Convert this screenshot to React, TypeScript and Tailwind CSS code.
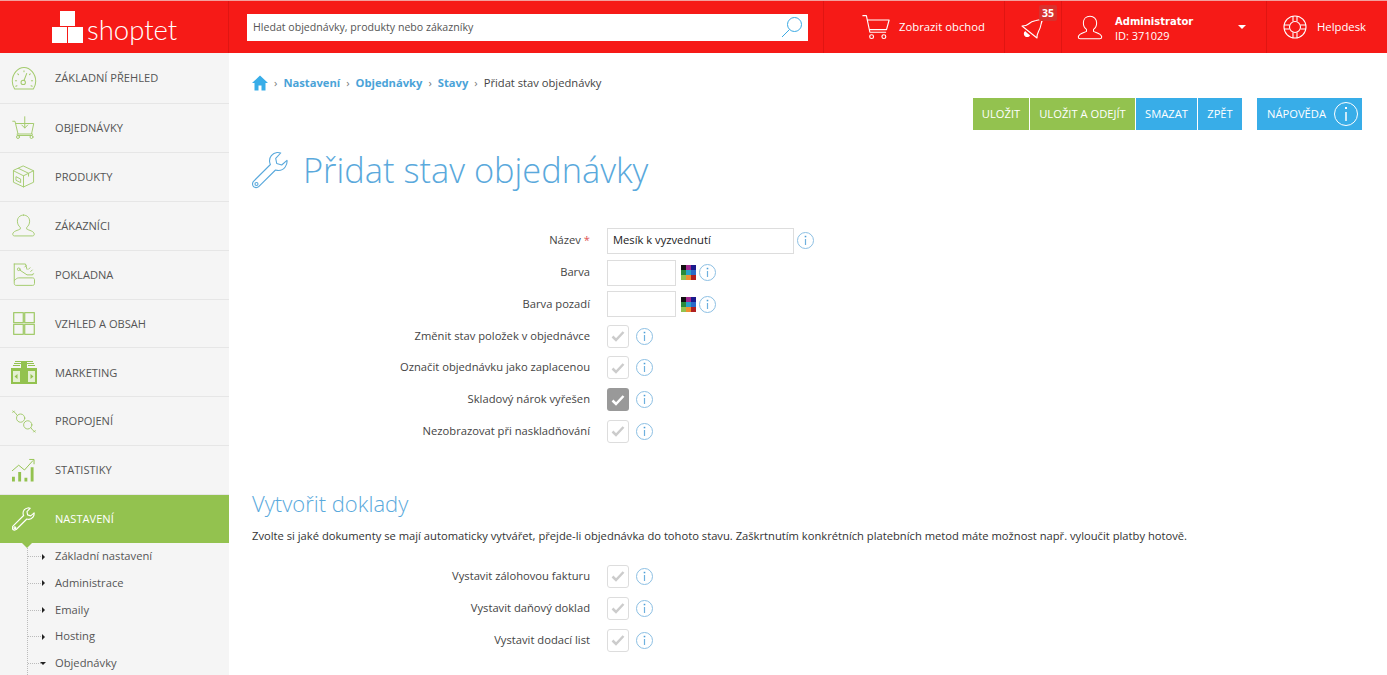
import type { ReactNode } from "react";

const font = "font-['Open_Sans',sans-serif]";

function Svg({ className, children, box = "0 0 32 32" }: { className?: string; children: ReactNode; box?: string }) {
  return (
    <svg viewBox={box} fill="none" stroke="currentColor" strokeWidth={1.3} strokeLinecap="round" strokeLinejoin="round" className={className}>
      {children}
    </svg>
  );
}

function Wrench({ className, width = 1.2 }: { className?: string; width?: number }) {
  return (
    <svg viewBox="0 0 38 38" fill="none" stroke="currentColor" strokeWidth={width} strokeLinejoin="round" className={className}>
      <path d="M25 1.500c-4.600.6-8 4.700-7.400 9.300.1 1 .4 1.900.8 2.700L1.500 30.400c-1.300 1.300-1.300 4 0 5.200 1.300 1.300 4 1.300 5.200 0L23.500 19c3.500 1.100 7.400 0 9.700-3 1.500-2 2.100-4.300 1.800-6.600l-5.300 4.600-5-1.500-1-5.100L28.700 2c-1-.4-2.600-.6-3.700-.5Z" />
      <circle cx="4.500" cy="33" r="1.500" />
    </svg>
  );
}

function Gauge() {
  return (
    <Svg className="w-[28px] h-[25px]">
      <path d="M4 29.500C2 26.500 1 23 1 19.500 1 10 8 2 16 2s15 8 15 17.500c0 3.500-1 7-3 10Z" />
      <path d="M5 19h1.500M25.500 19H27M16 6v1.500M8 10l1 1M24 10l-1 1M5.500 26l1.500-.7M26.500 26l-1.500-.7" />
      <circle cx="15" cy="21" r="2.800" />
      <path d="m16 18.500 3.500-9" />
    </Svg>
  );
}

function OrdersIcon() {
  return (
    <Svg className="w-[24px] h-[26px]">
      <path d="M1 7h3l4 17h18l3-14H5" />
      <path d="M7 24v1.500M27 24v1.500M8 26h18" />
      <circle cx="8" cy="28" r="2" />
      <circle cx="26" cy="28" r="2" />
      <path d="M17 1v15M13 12l4 4 4-4M10 10h14" />
    </Svg>
  );
}

function Box() {
  return (
    <Svg className="w-[23px] h-[25px]">
      <path d="M16 1.500 30 8v16l-14 6.500L2 24V8ZM2 8l14 7 14-7M16 15v15.500M9 4.700 23 11.500v4" />
      <path d="M6 16.500l6 3v5l-6-3Z" />
    </Svg>
  );
}

function Person({ className }: { className?: string }) {
  return (
    <Svg className={className}>
      <path d="M16 1.500c-5 0-8.500 3.500-8.500 8.500 0 3.800 1.800 7 4 8.500V21c-3 1.800-10 2.500-10.500 7 0 1.500 1 2.500 2.500 2.500h25c1.500 0 2.500-1 2.500-2.500-.5-4.500-7.500-5.200-10.500-7v-2.500c2.200-1.500 4-4.700 4-8.500 0-5-3.500-8.500-8.500-8.500Z" />
    </Svg>
  );
}

function Till() {
  return (
    <Svg className="w-[24px] h-[25px]">
      <path d="M3 2h15l2 7M3 2v26c0 1.500 1 2.500 2.500 2.500h22c1.500 0 2.500-1 2.500-2.500v-5c0-1.500-1-2.500-2.500-2.500H9c-2.500 0-4 2-6 3.500" />
      <circle cx="9" cy="9" r="1.800" />
      <path d="m11 10.500 9 6h7M17 6l2-2M22 9l2-2M25 12l2-2M27 16l2-1" />
    </Svg>
  );
}

function Grid4() {
  return (
    <Svg className="w-[22px] h-[23px]" box="0 0 22 23">
      <rect x="0.700" y="0.700" width="9.600" height="10" />
      <rect x="11.700" y="0.700" width="9.600" height="10" />
      <rect x="0.700" y="12.300" width="9.600" height="10" />
      <rect x="11.700" y="12.300" width="9.600" height="10" />
    </Svg>
  );
}

function Money() {
  return (
    <svg viewBox="0 0 26 23" className="w-[26px] h-[23px] text-[#93c24f]">
      <path fill="currentColor" d="M4 0h18v1H4zM3 2h20v1H3zM2 4h22v1H2z" />
      <rect x="0" y="7" width="26" height="16" fill="currentColor" />
      <rect x="2" y="10" width="7" height="11" fill="#e4f0d2" />
      <rect x="17" y="10" width="7" height="11" fill="#e4f0d2" />
      <path fill="currentColor" d="m3.500 15.500 3-2.500v5zM22.500 15.500l-3-2.500v5z" />
      <path fill="currentColor" d="M10 0h6v23h-6z" />
      <path fill="#f5f5f5" d="M9 4h1v3H9zM16 4h1v3h-1z" />
    </svg>
  );
}

function Plug() {
  return (
    <Svg className="w-[24px] h-[25px]" box="0 0 32 32">
      <path d="m1 2 3 2 3 4M31 30l-3-2-3-4" />
      <circle cx="11.500" cy="11.500" r="5.500" />
      <circle cx="21" cy="20.500" r="5.500" />
      <path d="m3 2-2 2M29 30l2-2" />
    </Svg>
  );
}

function Stats() {
  return (
    <svg viewBox="0 0 24 24" className="w-[23px] h-[24px] text-[#93c24f]">
      <path fill="currentColor" d="M0 19h3v5H0zM6.500 14h3v10h-3zM13 20h3v4h-3zM19.500 9h3v15h-3z" />
      <path fill="none" stroke="currentColor" d="m0 13 7-6 6 5 9-10M18 1h5v5" />
    </svg>
  );
}

const menu: { label: string; icon: ReactNode }[] = [
  { label: "ZÁKLADNÍ PŘEHLED", icon: <Gauge /> },
  { label: "OBJEDNÁVKY", icon: <OrdersIcon /> },
  { label: "PRODUKTY", icon: <Box /> },
  { label: "ZÁKAZNÍCI", icon: <Person className="w-[23px] h-[25px]" /> },
  { label: "POKLADNA", icon: <Till /> },
  { label: "VZHLED A OBSAH", icon: <Grid4 /> },
  { label: "MARKETING", icon: <Money /> },
  { label: "PROPOJENÍ", icon: <Plug /> },
  { label: "STATISTIKY", icon: <Stats /> },
];

const subMenu = ["Základní nastavení", "Administrace", "Emaily", "Hosting", "Objednávky"];

function Sidebar() {
  return (
    <aside className="w-[229px] shrink-0 bg-[#f5f5f5] text-[#555] overflow-hidden">
      {menu.map((item) => (
        <div key={item.label} className="h-[48.9px] first:h-[51px] flex items-center border-b border-[#e6e6e6]">
          <div className="w-[47px] mr-[8px] shrink-0 flex justify-center text-[#a3cb6d]">{item.icon}</div>
          <span className="text-[11.1px] pt-[1px]">{item.label}</span>
        </div>
      ))}
      <div className="relative h-[48px] flex items-center bg-[#93c24f] text-white">
        <div className="w-[47px] mr-[8px] shrink-0 flex justify-center">
          <Wrench className="w-[24px] h-[24px]" width={1.800} />
        </div>
        <span className="text-[11.1px] pt-[1px]">NASTAVENÍ</span>
        <div className="absolute left-[22px] -bottom-[5px] border-x-[5px] border-t-[5px] border-x-transparent border-t-[#93c24f]" />
      </div>
      <ul className="ml-[27px] border-l border-dotted border-[#bbb]">
        {subMenu.map((name, i) => (
          <li key={name} className="h-[26.75px] flex items-center">
            <span className="w-[13px] border-t border-dotted border-[#bbb]" />
            {i === 4 ? (
              <span className="mr-[9px] ml-[-1px] border-x-[3px] border-t-[3px] border-x-transparent border-t-[#222]" />
            ) : (
              <span className="ml-[1px] mr-[10px] border-y-[3px] border-l-[3px] border-y-transparent border-l-[#222]" />
            )}
            <span className="text-[11.2px] text-[#555]">{name}</span>
          </li>
        ))}
      </ul>
    </aside>
  );
}

function Cart({ className }: { className?: string }) {
  return (
    <Svg className={className}>
      <path d="M1 3h4l4 19h18M6.500 8H31l-3 11H9" />
      <circle cx="11" cy="27" r="2.200" />
      <circle cx="25" cy="27" r="2.200" />
    </Svg>
  );
}

function Header() {
  return (
    <header className="h-[53px] shrink-0 bg-[#f61a17] border-t border-[#f2a09e] flex text-white">
      <div className="w-[229px] shrink-0 flex items-center border-r border-[#e01512] pl-[52px]">
        <div className="flex items-end mt-[2px]">
          <div className="flex flex-col items-center w-[31px] mr-[4px] mb-[2px]">
            <div className="w-[15px] h-[15px] bg-white" />
            <div className="flex gap-px mt-px">
              <div className="w-[15px] h-[16px] bg-white" />
              <div className="w-[15px] h-[16px] bg-white" />
            </div>
          </div>
          <span className="font-['Lato',sans-serif] font-light text-[27.5px] leading-[31px]">shoptet</span>
        </div>
      </div>
      <div className="w-[595px] shrink-0 flex items-center pl-[18px] border-r border-[#e01512]">
        <div className="w-[561px] h-[27px] bg-white flex items-center justify-between pl-[6px] pr-[4px] text-[#555] text-[10.6px]">
          <span className="pt-[1px]">Hledat objednávky, produkty nebo zákazníky</span>
          <svg viewBox="0 0 24 24" fill="none" stroke="#3aa9e3" strokeWidth={1} className="w-[24px] h-[24px]">
            <circle cx="14.500" cy="9.500" r="7" />
            <path d="M9.500 14.500 2 22" />
          </svg>
        </div>
      </div>
      <div className="w-[181px] shrink-0 flex items-center pl-[38px] gap-[9px] border-r border-[#e01512] text-[11.3px]">
        <Cart className="w-[28px] h-[28px]" />
        Zobrazit obchod
      </div>
      <div className="relative w-[57px] shrink-0 border-r border-[#e01512] flex items-center pl-[16px]">
        <svg viewBox="0 0 24 24" fill="none" stroke="currentColor" strokeWidth={1.1} strokeLinejoin="round" className="w-[24px] h-[24px] mt-[1px]">
          <path d="M23 2c-2.500 1.500-5 2-8 2.500-3.500.5-5.500 1.500-7.500 3.500C6 9.500 3.500 10 1 10l15 12c-.3-2.500.5-4.500 1.500-6.500 1.500-2.500 2-4 2.500-7 .4-3 1.500-5 3-6.500Z" />
          <path d="M4.500 15.500c-1.500 1-1.500 3.500 0 4.500s3.500.5 4-1" fill="currentColor" />
        </svg>
        <span className="absolute top-[4px] right-[4px] bg-[#d8312e] rounded-[2px] px-[3px] h-[16px] leading-[16px] text-[10.500px] font-bold">35</span>
      </div>
      <div className="w-[205px] shrink-0 flex items-center pl-[15px] border-r border-[#e01512]">
        <Person className="w-[26px] h-[25px]" />
        <div className="ml-[12px] mt-[3px] text-[11px] leading-[14px]">
          <div className="font-bold font-['DejaVu_Sans',sans-serif] text-[10px]">Administrator</div>
          <div>ID: 371029</div>
        </div>
        <span className="ml-auto mr-[20px] border-x-[4.500px] border-t-[4px] border-x-transparent border-t-white" />
      </div>
      <div className="flex-1 flex items-center pl-[16px] gap-[10px] text-[11.3px]">
        <svg viewBox="0 0 24 24" fill="none" stroke="currentColor" strokeWidth={1.1} className="w-[24px] h-[24px]">
          <circle cx="12" cy="12" r="11" />
          <circle cx="12" cy="12" r="5.500" />
          <path d="M10 1.500v5M14 1.500v5M10 17.500v5M14 17.500v5M1.500 10h5M1.500 14h5M17.500 10h5M17.500 14h5" />
        </svg>
        Helpdesk
      </div>
    </header>
  );
}

function Info() {
  return (
    <svg viewBox="0 0 17 17" fill="none" className="w-[17px] h-[17px] shrink-0">
      <circle cx="8.500" cy="8.500" r="8" stroke="#8cbfe3" />
      <path d="M8.500 7v6" stroke="#6fb1de" strokeWidth={1.200} />
      <path d="M8.500 3.800v1.500" stroke="#4a9ed8" strokeWidth={1.600} />
    </svg>
  );
}

function Check({ on }: { on?: boolean }) {
  return (
    <span className={on ? "w-[22px] h-[23px] rounded-[3px] bg-[#999] flex items-center justify-center" : "w-[22px] h-[23px] rounded-[3px] border border-[#ddd] flex items-center justify-center"}>
      <svg viewBox="0 0 14 12" fill="none" stroke={on ? "#fff" : "#ccc"} strokeWidth={2.500} className="w-[14px] h-[12px]">
        <path d="m1.500 6.500 3.500 3.500 7.500-8" />
      </svg>
    </span>
  );
}

function Row({ label, star, children, tall }: { label: string; star?: boolean; children: ReactNode; tall?: boolean }) {
  return (
    <div className={tall ? "h-[32px] flex items-center" : "h-[31.75px] flex items-center"}>
      <div className="w-[338px] text-right text-[11.2px] text-[#444] shrink-0">
        {label}
        {star && <span className="text-[#e05555]"> *</span>}
      </div>
      <div className="ml-[17px] flex items-center">{children}</div>
    </div>
  );
}

function CheckRow({ label, on, tall }: { label: string; on?: boolean; tall?: boolean }) {
  return (
    <Row label={label} tall={tall}>
      <Check on={on} />
      <span className="ml-[7px]">
        <Info />
      </span>
    </Row>
  );
}

function Palette() {
  const colors = ["#111", "#a32a90", "#1a1a8c", "#2a8a3a", "#2aa0c8", "#2a6ac8", "#93c24f", "#f09030", "#b02020"];
  return (
    <span className="ml-[5px] mr-[3px] grid grid-cols-3 w-[15px] h-[15px]">
      {colors.map((c) => (
        <span key={c} className="w-[5px] h-[5px]" style={{ backgroundColor: c }} />
      ))}
    </span>
  );
}

function ColorRow({ label }: { label: string }) {
  return (
    <Row label={label}>
      <span className="w-[69px] h-[26px] border border-[#ddd]" />
      <Palette />
      <Info />
    </Row>
  );
}

function Toolbar() {
  const btn = "h-[32px] flex items-center justify-center text-[11.2px] text-white";
  return (
    <div className="flex justify-end pr-[2px] mt-[6px]">
      <div className="flex gap-px">
        <div className={`${btn} w-[56px] bg-[#93c24f]`}>ULOŽIT</div>
        <div className={`${btn} w-[105px] bg-[#93c24f]`}>ULOŽIT A ODEJÍT</div>
        <div className={`${btn} w-[61px] bg-[#38ade8]`}>SMAZAT</div>
        <div className={`${btn} w-[44px] bg-[#38ade8]`}>ZPĚT</div>
      </div>
      <div className="ml-[15px] h-[32px] w-[105px] flex items-center pl-[10px] gap-[8px] text-[11.2px] text-white bg-[#38ade8]">
        NÁPOVĚDA
        <svg viewBox="0 0 24 24" fill="none" stroke="#fff" className="w-[24px] h-[24px]">
          <circle cx="12" cy="12" r="11.500" />
          <path d="M12 10v9" strokeWidth={1.500} />
          <path d="M12 5v2" strokeWidth={2} />
        </svg>
      </div>
    </div>
  );
}

function Crumb({ children }: { children: ReactNode }) {
  return (
    <>
      <span className="font-bold text-[#4aa3d8]">{children}</span>
      <span className="mx-[6px] text-[#777]">›</span>
    </>
  );
}

export default function App() {
  return (
    <div className={`${font} w-[1387px] h-[675px] overflow-hidden flex flex-col bg-white`}>
      <Header />
      <div className="flex flex-1 min-h-0">
        <Sidebar />
        <main className="flex-1 pl-[23px] pr-[23px] min-w-0">
          <nav className="mt-[21px] h-[18px] flex items-center text-[11.2px] text-[#444]">
            <svg viewBox="0 0 16 16" className="w-[16px] h-[16px] text-[#38ade8]" fill="currentColor">
              <path d="M8 0.500 0 8h2.500v7.500h4v-5h3v5h4V8H16Z" />
            </svg>
            <span className="mx-[6px] text-[#777]">›</span>
            <Crumb>Nastavení</Crumb>
            <Crumb>Objednávky</Crumb>
            <Crumb>Stavy</Crumb>
            Přidat stav objednávky
          </nav>
          <Toolbar />
          <div className="mt-[2px] flex items-center h-[76px] text-[#5aa9dc]">
            <Wrench className="w-[38px] h-[38px]" width={1.100} />
            <h1 className="ml-[13px] text-[34.4px] font-light leading-none">Přidat stav objednávky</h1>
          </div>
          <div className="mt-[17px]">
            <Row label="Název" star>
              <span className="w-[187px] h-[26px] border border-[#ddd] flex items-center px-[5px] text-[11.2px] text-[#222]">Mesík k vyzvednutí</span>
              <span className="ml-[3px]">
                <Info />
              </span>
            </Row>
            <ColorRow label="Barva" />
            <ColorRow label="Barva pozadí" />
            <CheckRow label="Změnit stav položek v objednávce" />
            <CheckRow label="Označit objednávku jako zaplacenou" />
            <CheckRow label="Skladový nárok vyřešen" on />
            <CheckRow label="Nezobrazovat při naskladňování" />
          </div>
          <h2 className="mt-[41px] text-[22px] font-light text-[#5aa9dc] leading-[30px]">Vytvořit doklady</h2>
          <p className="mt-[10px] text-[11.2px] text-[#333] leading-[16px]">
            Zvolte si jaké dokumenty se mají automaticky vytvářet, přejde-li objednávka do tohoto stavu. Zaškrtnutím konkrétních platebních metod máte možnost např. vyloučit platby hotově.
          </p>
          <div className="mt-[16px]">
            <CheckRow label="Vystavit zálohovou fakturu" tall />
            <CheckRow label="Vystavit daňový doklad" tall />
            <CheckRow label="Vystavit dodací list" tall />
          </div>
        </main>
      </div>
    </div>
  );
}
